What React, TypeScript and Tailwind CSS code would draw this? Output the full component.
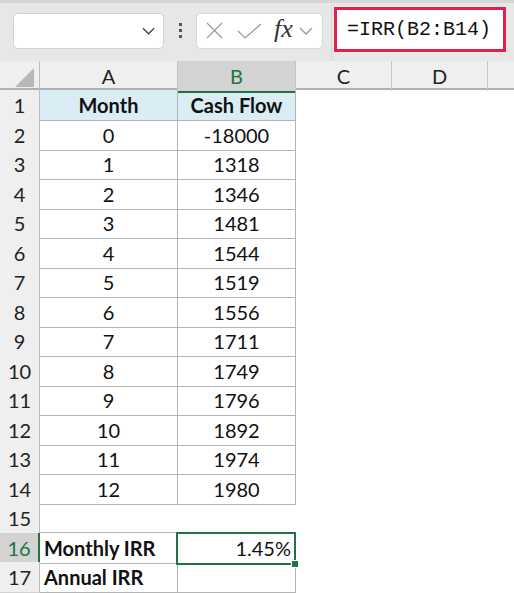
import React from "react";

const ROWS: [string, string][] = [
  ["0", "-18000"],
  ["1", "1318"],
  ["2", "1346"],
  ["3", "1481"],
  ["4", "1544"],
  ["5", "1519"],
  ["6", "1556"],
  ["7", "1711"],
  ["8", "1749"],
  ["9", "1796"],
  ["10", "1892"],
  ["11", "1974"],
  ["12", "1980"],
];

const GRID = "grid grid-cols-[40px_138px_118px_96px_96px_1fr]";
const ROW_H = "h-[29.5px]";

function Chevron({ className }: { className?: string }) {
  return (
    <svg viewBox="0 0 14 8" className={className} fill="none" stroke="currentColor" strokeWidth="1.4">
      <path d="M1 1l6 6 6-6" />
    </svg>
  );
}

function FormulaBar() {
  return (
    <div className="relative h-[61px] bg-[#e7e7e7] border-t-[3px] border-[#d6d6d6] flex items-center">
      {/* name box */}
      <div className="ml-[13px] w-[151px] h-[36px] rounded-[5px] bg-white border border-[#d2d2d2] flex items-center justify-end pr-[8px] -mt-[3px]">
        <Chevron className="w-[13px] h-[8px] text-[#444]" />
      </div>
      <div className="w-[32px] flex flex-col items-center gap-[3px] -mt-[3px]">
        <span className="w-[3px] h-[3px] bg-[#555]" />
        <span className="w-[3px] h-[3px] bg-[#555]" />
        <span className="w-[3px] h-[3px] bg-[#555]" />
      </div>
      {/* cancel / enter / fx */}
      <div className="w-[127px] h-[36px] rounded-[5px] bg-white border border-[#d8d8d8] flex items-center pl-[9px] -mt-[3px]">
        <svg viewBox="0 0 17 17" className="w-[17px] h-[17px] text-[#9a9a9a]" fill="none" stroke="currentColor" strokeWidth="1.2">
          <path d="M1 1l15 15M16 1L1 16" />
        </svg>
        <svg viewBox="0 0 25 16" className="ml-[14px] w-[25px] h-[16px] text-[#9a9a9a]" fill="none" stroke="currentColor" strokeWidth="1.2">
          <path d="M1 8l7 7L24 1" />
        </svg>
        <span className="ml-[12px] text-[26px] italic leading-none text-[#333] font-['Liberation_Serif',serif] -mt-[4px]">fx</span>
        <Chevron className="ml-[6px] w-[14px] h-[8px] text-[#999]" />
      </div>
      <div className="ml-[8px] self-stretch w-px bg-[#d9d9d9]" />
      {/* formula */}
      <div className="ml-[2px] w-[172px] h-[45px] bg-white border-[3px] border-[#e1204c] flex items-center pl-[10px] -mt-[5px]">
        <span className="text-[20px] leading-none text-[#111] font-['Liberation_Mono',monospace]">=IRR(B2:B14)</span>
      </div>
    </div>
  );
}

function ColumnHeader() {
  const cols = ["A", "B", "C", "D"];
  return (
    <div className={`${GRID} h-[29px] bg-[#efefef] border-b-2 border-[#b0b0b0]`}>
      <div className="relative border-r border-[#bdbdbd]">
        <div className="absolute right-[5px] bottom-[4px] w-0 h-0 border-l-[19px] border-l-transparent border-b-[19px] border-b-[#b8b8b8]" />
      </div>
      {cols.map((c) =>
        c === "B" ? (
          <div key={c} className="relative bg-[#d3d3d3] flex items-center justify-center text-[20px] text-[#217346] border-r border-[#c6c6c6]">
            {c}
            <div className="absolute left-0 right-0 -bottom-[2px] h-[2px] bg-[#217346]" />
          </div>
        ) : (
          <div key={c} className="flex items-center justify-center text-[20px] text-[#222] border-r border-[#c6c6c6]">
            {c}
          </div>
        )
      )}
      <div />
    </div>
  );
}

function RowHead({ n, selected }: { n: number; selected?: boolean }) {
  return selected ? (
    <div className="bg-[#d3d3d3] border-r-2 border-[#217346] border-b border-b-[#c8c8c8] flex items-center justify-center text-[20px] text-[#217346]">
      {n}
    </div>
  ) : (
    <div className="bg-[#efefef] border-r border-[#bdbdbd] border-b border-b-[#d2d2d2] flex items-center justify-center text-[20px] text-[#222]">
      {n}
    </div>
  );
}

const CELL = "border-r border-b border-[#b4b4b4] flex items-center text-[20px] text-[#111]";

export default function App() {
  return (
    <div className="w-[514px] h-[593px] overflow-hidden bg-white font-['Lato','Carlito',sans-serif]">
      <FormulaBar />
      <ColumnHeader />

      <div className={`${GRID} ${ROW_H}`}>
        <RowHead n={1} />
        <div className={`${CELL} bg-[#dbedf4] justify-center font-bold`}>Month</div>
        <div className={`${CELL} bg-[#dbedf4] justify-center font-bold`}>Cash Flow</div>
      </div>

      {ROWS.map(([m, cf], i) => (
        <div key={i} className={`${GRID} ${ROW_H}`}>
          <RowHead n={i + 2} />
          <div className={`${CELL} justify-center`}>{m}</div>
          <div className={`${CELL} justify-center`}>{cf}</div>
        </div>
      ))}

      <div className={`${GRID} ${ROW_H}`}>
        <RowHead n={15} />
      </div>

      <div className={`${GRID} ${ROW_H}`}>
        <RowHead n={16} selected />
        <div className={`${CELL} border-t pl-[4px] font-bold -mt-px`}>Monthly IRR</div>
        <div className={`${CELL} border-t relative justify-end pr-[4px] -mt-px`}>
          1.45%
          <div className="absolute -left-[2px] -top-[1px] -right-[1px] -bottom-[2px] border-2 border-[#217346]">
            <div className="absolute -right-[4px] -bottom-[4px] w-[6px] h-[6px] bg-[#217346] outline outline-1 outline-white" />
          </div>
        </div>
      </div>

      <div className={`${GRID} ${ROW_H}`}>
        <RowHead n={17} />
        <div className={`${CELL} pl-[4px] font-bold`}>Annual IRR</div>
        <div className={CELL} />
      </div>
    </div>
  );
}
